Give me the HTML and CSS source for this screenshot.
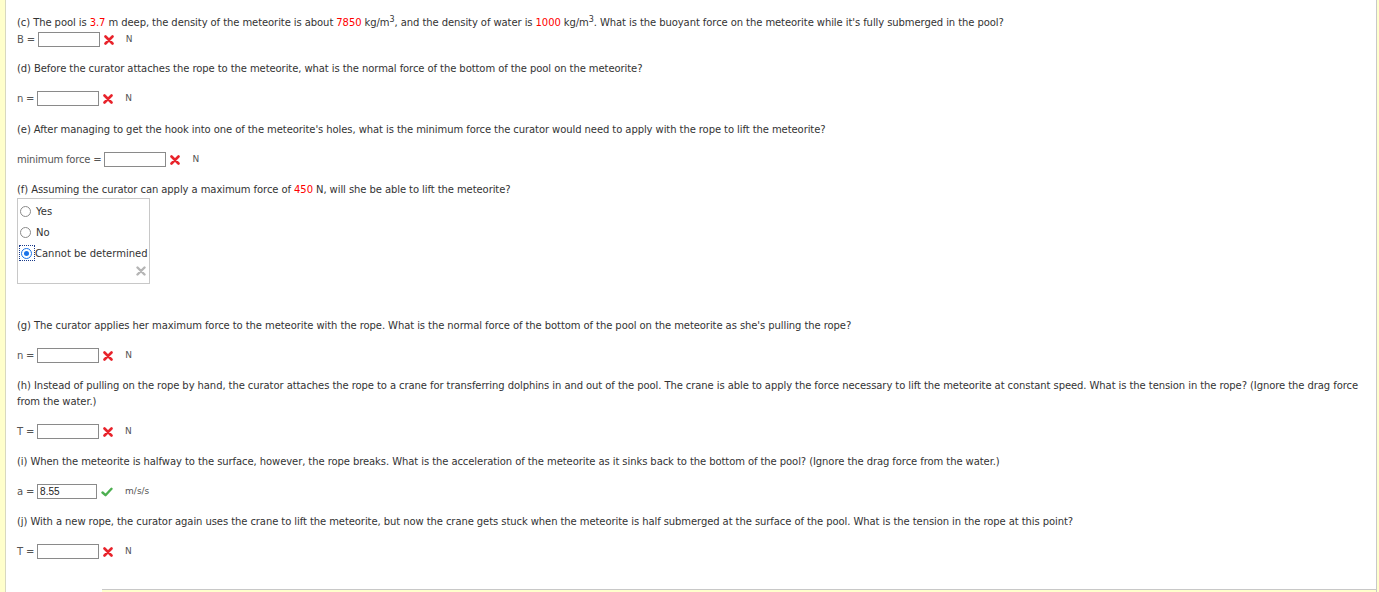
FILE: index.html
```html
<!DOCTYPE html>
<html>
<head>
<meta charset="utf-8">
<link rel="stylesheet" href="styles.css">
</head>
<body>
<div class="page">
  <div class="content">
    <p class="q tight">(c) The pool is <span class="red">3.7</span> m deep, the density of the meteorite is about <span class="red">7850</span> kg/m<sup>3</sup>, and the density of water is <span class="red">1000</span> kg/m<sup>3</sup>. What is the buoyant force on the meteorite while it's fully submerged in the pool?</p>
    <div class="row r14"><span class="lbl">B =</span><span class="inp"></span><svg class="mark" viewBox="0 0 10 10"><path d="M1.5 1.5 L8.5 8.5 M8.5 1.5 L1.5 8.5" stroke="#e8232b" stroke-width="2.6" stroke-linecap="round"/></svg><span class="unit">N</span></div>

    <p class="q">(d) Before the curator attaches the rope to the meteorite, what is the normal force of the bottom of the pool on the meteorite?</p>
    <div class="row r16"><span class="lbl">n =</span><span class="inp"></span><svg class="mark" viewBox="0 0 10 10"><path d="M1.5 1.5 L8.5 8.5 M8.5 1.5 L1.5 8.5" stroke="#e8232b" stroke-width="2.6" stroke-linecap="round"/></svg><span class="unit">N</span></div>

    <p class="q">(e) After managing to get the hook into one of the meteorite's holes, what is the minimum force the curator would need to apply with the rope to lift the meteorite?</p>
    <div class="row"><span class="lbl">minimum force =</span><span class="inp"></span><svg class="mark" viewBox="0 0 10 10"><path d="M1.5 1.5 L8.5 8.5 M8.5 1.5 L1.5 8.5" stroke="#e8232b" stroke-width="2.6" stroke-linecap="round"/></svg><span class="unit">N</span></div>

    <p class="q tight0">(f) Assuming the curator can apply a maximum force of <span class="red">450</span> N, will she be able to lift the meteorite?</p>
    <div class="choices">
      <label class="opt"><span class="radio"></span>Yes</label>
      <label class="opt"><span class="radio"></span>No</label>
      <label class="opt"><span class="focus"><span class="radio on"></span></span>Cannot be determined</label>
      <div class="xrow"><svg class="gx" viewBox="0 0 10 10"><path d="M1.5 1.5 L8.5 8.5 M8.5 1.5 L1.5 8.5" stroke="#b5b5b5" stroke-width="2.4" stroke-linecap="round"/></svg></div>
    </div>

    <p class="q">(g) The curator applies her maximum force to the meteorite with the rope. What is the normal force of the bottom of the pool on the meteorite as she's pulling the rope?</p>
    <div class="row"><span class="lbl">n =</span><span class="inp"></span><svg class="mark" viewBox="0 0 10 10"><path d="M1.5 1.5 L8.5 8.5 M8.5 1.5 L1.5 8.5" stroke="#e8232b" stroke-width="2.6" stroke-linecap="round"/></svg><span class="unit">N</span></div>

    <p class="q">(h) Instead of pulling on the rope by hand, the curator attaches the rope to a crane for transferring dolphins in and out of the pool. The crane is able to apply the force necessary to lift the meteorite at constant speed. What is the tension in the rope? (Ignore the drag force from the water.)</p>
    <div class="row"><span class="lbl">T =</span><span class="inp"></span><svg class="mark" viewBox="0 0 10 10"><path d="M1.5 1.5 L8.5 8.5 M8.5 1.5 L1.5 8.5" stroke="#e8232b" stroke-width="2.6" stroke-linecap="round"/></svg><span class="unit">N</span></div>

    <p class="q">(i) When the meteorite is halfway to the surface, however, the rope breaks. What is the acceleration of the meteorite as it sinks back to the bottom of the pool? (Ignore the drag force from the water.)</p>
    <div class="row"><span class="lbl">a =</span><span class="inp val">8.55</span><svg class="mark check" viewBox="0 0 12 10"><path d="M1.5 5.5 L4.5 8.2 L10.5 1.8" fill="none" stroke="#4caf50" stroke-width="2.4" stroke-linecap="round" stroke-linejoin="round"/></svg><span class="unit">m/s/s</span></div>

    <p class="q">(j) With a new rope, the curator again uses the crane to lift the meteorite, but now the crane gets stuck when the meteorite is half submerged at the surface of the pool. What is the tension in the rope at this point?</p>
    <div class="row"><span class="lbl">T =</span><span class="inp"></span><svg class="mark" viewBox="0 0 10 10"><path d="M1.5 1.5 L8.5 8.5 M8.5 1.5 L1.5 8.5" stroke="#e8232b" stroke-width="2.6" stroke-linecap="round"/></svg><span class="unit">N</span></div>

    <div class="footbar"></div>
  </div>
</div>
</body>
</html>
```
FILE: styles.css
```css
html, body {
  margin: 0;
  padding: 0;
  background: #ffffcc;
}
body {
  font-family: "DejaVu Sans", Verdana, sans-serif;
  font-size: 10px;
  color: #333;
}
.page {
  width: 1377px;
  height: 592px;
  overflow: hidden;
  background: #ffffcc;
  padding-left: 5px;
  box-sizing: border-box;
}
.content {
  background: #fff;
  border-left: 1px solid #d8d8c0;
  border-right: 1px solid #c8c8c8;
  padding: 15px 12px 0 11px;
  height: 592px;
  box-sizing: border-box;
  display: flex;
  flex-direction: column;
  align-items: stretch;
}
.q {
  margin: 0 0 13px;
  line-height: 16px;
  font-size: 10px;
  letter-spacing: -0.08px;
}
.q.tight { margin-bottom: 0; }
.q.tight0 { margin-bottom: 0; }
.red { color: #ff0000; }
sup {
  font-size: 8px;
  line-height: 0;
  vertical-align: 4px;
}
.row {
  display: flex;
  align-items: center;
  height: 16px;
  margin-bottom: 15px;
  font-size: 10px;
  color: #555;
}
.row.r14 { margin-bottom: 14px; }
.row.r16 { margin-bottom: 16px; }
.lbl { margin-right: 3px; letter-spacing: -0.2px; }
.inp {
  display: inline-block;
  width: 58px;
  height: 13px;
  border: 1px solid #8a8a8a;
  background: #fff;
  font-family: "Liberation Sans", Arial, sans-serif;
  font-size: 10px;
  line-height: 13px;
  padding-left: 2px;
  color: #222;
  box-sizing: content-box;
}
.inp.val { width: 56px; }
.mark {
  width: 10px;
  height: 10px;
  margin-left: 4px;
  margin-top: 2px;
}
.mark.check { width: 12px; }
.unit { margin-left: 12px; font-size: 9px; }
.choices {
  width: 133px;
  height: 86px;
  box-sizing: border-box;
  border: 1px solid #c8c8c8;
  padding: 4px 0 0 2px;
  margin-bottom: 34px;
  font-size: 10px;
}
.opt {
  display: flex;
  align-items: center;
  height: 16px;
  margin-bottom: 5px;
}
.radio {
  display: inline-block;
  width: 9px;
  height: 9px;
  border: 1px solid #8a8a8a;
  border-radius: 50%;
  background: #fff;
  box-sizing: content-box;
  margin-right: 5px;
  position: relative;
}
.radio.on {
  border-color: #1a73e8;
}
.radio.on::after {
  content: "";
  position: absolute;
  left: 2px;
  top: 2px;
  width: 5px;
  height: 5px;
  border-radius: 50%;
  background: #1a73e8;
}
.focus {
  display: inline-flex;
  align-items: center;
  outline: 1px dotted #1a3a8a;
  height: 14px;
  margin-right: 1px;
}
.focus .radio { margin: 0 2px 0 1px; }
.xrow {
  display: flex;
  justify-content: flex-end;
  padding-right: 3px;
  margin-top: 0;
}
.gx { width: 10px; height: 10px; }
.footbar {
  margin-top: auto;
  margin-left: 85px;
  margin-right: -12px;
  height: 2px;
  border-top: 1px solid #c8c8c8;
  background: #ffffcc;
}
```
